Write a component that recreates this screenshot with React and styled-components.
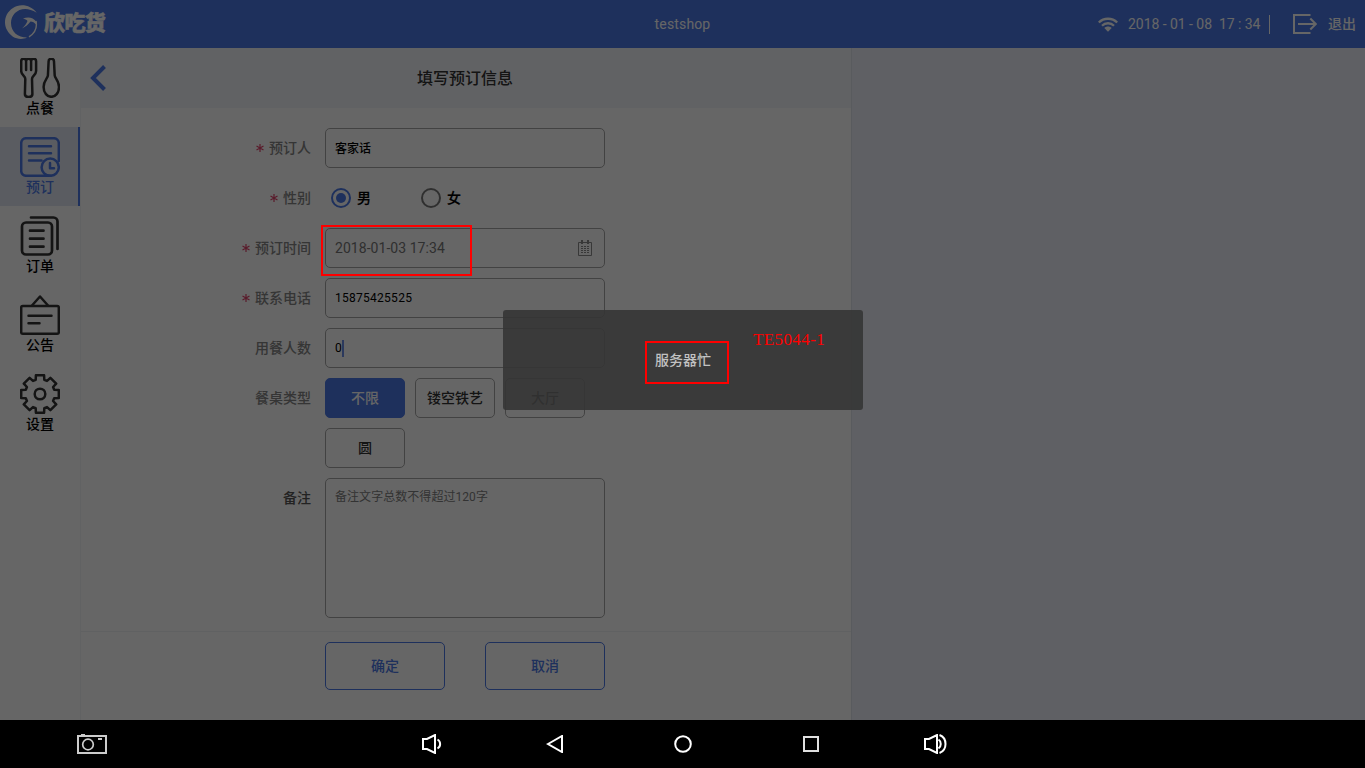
import React from "react";
import styled, { createGlobalStyle, css } from "styled-components";

const sans = `Roboto, "Noto Sans CJK SC", sans-serif`;
const blue = "#4b78e6";

const GlobalStyle = createGlobalStyle`
  * { box-sizing: border-box; }
  body { margin: 0; background: #000; font-family: ${sans}; font-size: 14px; }
`;

const Screen = styled.div`
  position: relative;
  display: flex;
  flex-direction: column;
  width: 1365px;
  height: 768px;
  overflow: hidden;
`;

const AppWindow = styled.div`
  position: relative;
  display: flex;
  flex-direction: column;
  height: 720px;
  background: #fff;
`;

const TopBar = styled.header`
  display: grid;
  grid-template-columns: 1fr auto 1fr;
  align-items: center;
  height: 48px;
  padding: 0 9px 0 4px;
  background: ${blue};
  color: #fff;
`;

const Brand = styled.div`
  display: flex;
  align-items: center;
  gap: 6px;
  height: 48px;
  padding-bottom: 4px;
`;

const BrandName = styled.span`
  font-size: 21px;
  line-height: 24px;
  font-weight: 900;
  letter-spacing: -0.6px;
  -webkit-text-stroke: 0.5px #fff;
  padding-top: 1px;
  color: #fff;
`;

const ShopName = styled.span`
  letter-spacing: 0.15px;
  margin-left: 5px;
`;

const Status = styled.div`
  display: flex;
  align-items: center;
  justify-content: flex-end;
`;

const Clock = styled.span`
  width: 132px;
  margin: 0 9px 0 10px;
  letter-spacing: -0.04px;
  white-space: pre;
`;

const Divider = styled.span`
  width: 1px;
  height: 19px;
  margin-right: 23px;
  background: #fff;
`;

const Logout = styled.span`
  display: flex;
  align-items: center;
  gap: 11px;
`;

const LogoutText = styled.span`
  padding-bottom: 2px;
  font-weight: 500;
`;

const Body = styled.div`
  display: flex;
  flex: 1;
  min-height: 0;
`;

const SideNav = styled.nav`
  width: 81px;
  border-right: 1px solid #f2f4f8;
`;

const NavItem = styled.div`
  display: flex;
  flex-direction: column;
  align-items: center;
  width: 80px;
  height: 79px;
  padding-top: 10px;
  font-weight: 500;
  line-height: 20px;
  color: ${(p) => (p.$active ? blue : "#000")};
  ${(p) =>
    p.$active &&
    css`
      background: #e2e7f3;
      box-shadow: inset -2px 0 ${blue};
    `}
`;

const NavIcon = styled.svg`
  width: 40px;
  height: 40px;
  fill: none;
  stroke: ${(p) => (p.$active ? blue : "#333")};
  stroke-width: 2.5;
  stroke-linecap: round;
  stroke-linejoin: round;
`;

const Main = styled.main`
  display: flex;
  flex-direction: column;
  width: 770px;
`;

const TitleBar = styled.div`
  display: grid;
  grid-template-columns: 40px 1fr 40px;
  align-items: center;
  height: 60px;
  padding: 0 2px 0 0;
  background: #f3f5f9;
`;

const BackIcon = styled.svg`
  width: 18px;
  height: 26px;
  margin-left: 8px;
  fill: none;
  stroke: ${blue};
  stroke-width: 4;
`;

const Title = styled.h1`
  margin: 0;
  padding-bottom: 2px;
  font-size: 16px;
  font-weight: 500;
  color: #333;
  text-align: center;
`;

const Form = styled.div`
  display: flex;
  flex-direction: column;
  gap: 10px;
  height: 523px;
  padding-top: 20px;
`;

const Row = styled.div`
  display: grid;
  grid-template-columns: 230px 280px;
  column-gap: 14px;
`;

const Label = styled.label`
  display: flex;
  align-items: center;
  justify-content: flex-end;
  gap: 5px;
  height: 40px;
  padding-bottom: 2px;
  font-weight: 500;
  color: ${(p) => (p.$dark ? "#555" : "#858585")};
`;

const RequiredIcon = styled.svg`
  width: 8px;
  height: 8px;
  margin-top: 2px;
  fill: none;
  stroke: #e0446c;
  stroke-width: 1.2;
`;

const Field = styled.div`
  display: flex;
  align-items: center;
  height: 40px;
  padding: 0 11px ${(p) => (p.$numeric ? 0 : 2)}px 9px;
  border: 1px solid #a6a6a6;
  border-radius: 5px;
  font-size: 12px;
  font-weight: ${(p) => (p.$numeric ? 400 : 500)};
  letter-spacing: ${(p) => (p.$numeric ? "0.27px" : "0")};
  color: #000;
`;

const DateField = styled(Field)`
  justify-content: space-between;
  padding-bottom: 0;
  font-size: 14px;
  font-weight: 400;
  letter-spacing: 0.05px;
  color: #777;
`;

const Caret = styled.span`
  width: 2px;
  height: 17px;
  background: #6d90e8;
`;

const RadioGroup = styled.div`
  display: grid;
  grid-template-columns: 90px 90px;
  align-items: center;
  padding-left: 6px;
  height: 40px;
`;

const RadioOption = styled.div`
  display: flex;
  align-items: center;
  gap: 6px;
  color: #000;
`;

const RadioText = styled.span`
  padding-bottom: 2px;
  font-weight: 500;
  -webkit-text-stroke: 0.2px #000;
`;

const RadioMark = styled.span`
  width: 20px;
  height: 20px;
  padding: 3px;
  border: 2px solid ${(p) => (p.$checked ? blue : "#777")};
  border-radius: 50%;
  background: ${(p) => (p.$checked ? blue : "transparent")} content-box;
`;

const Chips = styled.div`
  display: flex;
  flex-wrap: wrap;
  gap: 10px;
`;

const Chip = styled.div`
  display: flex;
  align-items: center;
  justify-content: center;
  width: 80px;
  height: 40px;
  padding-bottom: 2px;
  border: 1px solid ${(p) => (p.$selected ? blue : "#a6a6a6")};
  border-radius: 5px;
  background: ${(p) => (p.$selected ? blue : "transparent")};
  color: ${(p) => (p.$selected ? "#fff" : "#333")};
  font-weight: 500;
`;

const Note = styled.div`
  height: 140px;
  padding: 9px;
  border: 1px solid #a6a6a6;
  border-radius: 5px;
  font-size: 12px;
  line-height: 18px;
  letter-spacing: 0.05px;
  color: #808080;
`;

const Actions = styled.div`
  display: flex;
  gap: 40px;
  padding: 10px 0 0 244px;
  border-top: 1px solid #f0f2f6;
`;

const ActionButton = styled.button`
  width: 120px;
  height: 48px;
  padding: 0 0 2px;
  border: 1px solid ${blue};
  border-radius: 5px;
  background: transparent;
  color: ${blue};
  font: 500 14px ${sans};
`;

const EmptyPane = styled.aside`
  flex: 1;
  border-left: 1px solid #dfe3eb;
  background: #eef1f9;
`;

const Backdrop = styled.div`
  position: absolute;
  inset: 0;
  background: rgba(0, 0, 0, 0.6);
`;

const Toast = styled.div`
  position: absolute;
  left: 503px;
  top: 310px;
  display: flex;
  align-items: center;
  justify-content: center;
  width: 360px;
  height: 100px;
  padding-bottom: 2px;
  border-radius: 3px;
  background: rgba(52, 52, 52, 0.88);
  color: #c2c2c2;
  font-weight: 500;
`;

const MarkBox = styled.div`
  position: absolute;
  left: ${(p) => p.$x}px;
  top: ${(p) => p.$y}px;
  width: ${(p) => p.$w}px;
  height: ${(p) => p.$h}px;
  border: 2px solid #f00;
`;

const MarkText = styled.span`
  position: absolute;
  left: 753px;
  top: 330px;
  font: 17px/20px "Liberation Serif", serif;
  letter-spacing: 0.4px;
  color: #f00;
`;

const SystemBar = styled.footer`
  display: grid;
  grid-template-columns: 184px 188px 119px 128px 128px 128px 121px;
  align-items: center;
  justify-items: center;
  height: 48px;
  background: #000;
`;

const SystemIcon = styled.svg`
  grid-column: ${(p) => p.$col};
  fill: none;
  stroke: ${(p) => p.$tone || "#fff"};
  stroke-width: 2;
`;

const gearPath = (() => {
  const tooth = [[-4.3, -14.2], [-4.1, -18.8], [4.1, -18.8], [4.3, -14.2]];
  const pts = [];
  for (let i = 0; i < 8; i++) {
    const a = (i * Math.PI) / 4;
    tooth.forEach(([x, y]) =>
      pts.push(
        `${(20 + x * Math.cos(a) - y * Math.sin(a)).toFixed(2)} ${(20 + x * Math.sin(a) + y * Math.cos(a)).toFixed(2)}`
      )
    );
  }
  return `M${pts.join("L")}Z`;
})();

const navItems = [
  {
    label: "点餐",
    icon: (
      <>
        <path d="M6.1 12V3.2a2.4 2.4 0 0 0-4.9 0V13c0 4 4.100 4.500 4.100 8l-.4 15c0 4 7.500 4 7.500 0L12 21c0-3.500 4.100-4 4.100-8V3.200a2.400 2.400 0 0 0-5 0V12M6.100 3.200a2.400 2.400 0 0 1 5 0" />
        <path d="M28.600 3.500a2.700 2.700 0 0 1 5.400 0l.7 14c.2 3 4.300 5 4.300 11.500 0 6-3.600 9.800-7.700 9.800s-7.700-3.800-7.700-9.800c0-6.500 4.100-8.500 4.300-11.500Z" />
      </>
    ),
  },
  {
    label: "预订",
    active: true,
    icon: (
      <>
        <path d="M38.800 24V6a5 5 0 0 0-5-4.800H6a5 5 0 0 0-4.800 5v28a5 5 0 0 0 5 4.600h24" />
        <path d="M9 9.300h22M9 16.300h22M9 23.500h12.500" />
        <circle cx="30.200" cy="30.200" r="8.600" />
        <path d="M30 26v5.300h4" />
      </>
    ),
  },
  {
    label: "订单",
    icon: (
      <>
        <path strokeWidth="2.700" d="M11 1.500h22.500a4 4 0 0 1 4 4V33" />
        <rect strokeWidth="2.700" x="2" y="6.500" width="30" height="32" rx="4" />
        <path strokeWidth="2.700" d="M10 14.700h13.500M10 22.700h13.500M10 30.700h13.500" />
      </>
    ),
  },
  {
    label: "公告",
    icon: (
      <>
        <rect x="1.200" y="11" width="37.600" height="27.700" rx="1.500" />
        <path d="M12 10.500 20 1.500l8 9M8.500 20.700h23M8.500 28.300h11" />
      </>
    ),
  },
  {
    label: "设置",
    icon: (
      <>
        <path d={gearPath} />
        <circle cx="20" cy="20" r="5.300" />
      </>
    ),
  },
];

const Required = () => (
  <RequiredIcon viewBox="0 0 8 8">
    <path d="M4 0v8M.5 2l7 4M.5 6l7-4" />
  </RequiredIcon>
);

const FormRow = ({ label, required, dark, children }) => (
  <Row>
    <Label $dark={dark}>
      {required && <Required />}
      {label}
    </Label>
    {children}
  </Row>
);

export default function App() {
  return (
    <Screen>
      <GlobalStyle />
      <AppWindow>
        <TopBar>
          <Brand>
            <svg width="34" height="36" viewBox="0 0 34 36" fill="#fff">
              <path d="M32.700 8.700C27 1 16-1 9 4 1 9-1 19 3 26c4 8 13 11 20 7.500C14 33.500 7 28 7 19 7 8 19 0 32.700 8.700Z" />
              <path d="M32 17c1.300 6-1 12-7 15.800" fill="none" stroke="#fff" strokeWidth="1.400" />
              <path d="M19 14.500c5-2 10-1.500 13.500 3.500v3c-2-2.500-4-3.500-6-3.500-2 3-5 5-8.500 7 2.500-2.500 4.500-4.500 5.500-7.500-1-1.500-2.500-2-4.500-2.500Z" />
            </svg>
            <BrandName>欣吃货</BrandName>
          </Brand>
          <ShopName>testshop</ShopName>
          <Status>
            <svg width="20" height="15" viewBox="0 0 20 15" fill="none" stroke="#fff" strokeWidth="2.300">
              <path d="M.8 5.500c5-5 13.400-5 18.400 0M4 8.700c3.300-3.300 8.700-3.300 12 0" />
              <path d="M6.300 11c2-2 5.400-2 7.400 0L10 14.700Z" fill="#fff" stroke="none" />
            </svg>
            <Clock>2018 - 01 - 08  17 : 34</Clock>
            <Divider />
            <Logout>
              <svg width="24" height="20" viewBox="0 0 24 20" fill="none" stroke="#fff" strokeWidth="2">
                <path d="M17.500 1H1v18h16.500M5 10h18M17.300 4.500l5.500 5.500-5.500 5.500" />
              </svg>
              <LogoutText>退出</LogoutText>
            </Logout>
          </Status>
        </TopBar>
        <Body>
          <SideNav>
            {navItems.map((item) => (
              <NavItem key={item.label} $active={item.active}>
                <NavIcon viewBox="0 0 40 40" $active={item.active}>
                  {item.icon}
                </NavIcon>
                {item.label}
              </NavItem>
            ))}
          </SideNav>
          <Main>
            <TitleBar>
              <BackIcon viewBox="0 0 18 26">
                <path d="M15.500 1.500 4 13l11.500 11.500" />
              </BackIcon>
              <Title>填写预订信息</Title>
            </TitleBar>
            <Form>
              <FormRow label="预订人" required>
                <Field>客家话</Field>
              </FormRow>
              <FormRow label="性别" required>
                <RadioGroup>
                  <RadioOption>
                    <RadioMark $checked />
                    <RadioText>男</RadioText>
                  </RadioOption>
                  <RadioOption>
                    <RadioMark />
                    <RadioText>女</RadioText>
                  </RadioOption>
                </RadioGroup>
              </FormRow>
              <FormRow label="预订时间" required>
                <DateField>
                  2018-01-03 17:34
                  <svg width="16" height="16" viewBox="0 0 16 16" fill="none" stroke="#8c8c8c">
                    <path d="M1.500 2.500h13v13h-13Z" />
                    <path strokeWidth="2" d="M5 0v4M11 0v4" />
                    <path strokeDasharray="2 1" d="M4 6.500h8M4 8.500h8M4 10.500h8M4 12.500h8" />
                  </svg>
                </DateField>
              </FormRow>
              <FormRow label="联系电话" required>
                <Field $numeric>15875425525</Field>
              </FormRow>
              <FormRow label="用餐人数">
                <Field $numeric>
                  0<Caret />
                </Field>
              </FormRow>
              <FormRow label="餐桌类型">
                <Chips>
                  <Chip $selected>不限</Chip>
                  <Chip>镂空铁艺</Chip>
                  <Chip>大厅</Chip>
                  <Chip>圆</Chip>
                </Chips>
              </FormRow>
              <FormRow label="备注" dark>
                <Note>备注文字总数不得超过120字</Note>
              </FormRow>
            </Form>
            <Actions>
              <ActionButton>确定</ActionButton>
              <ActionButton>取消</ActionButton>
            </Actions>
          </Main>
          <EmptyPane />
        </Body>
        <Backdrop />
        <Toast>服务器忙</Toast>
      </AppWindow>
      <SystemBar>
        <SystemIcon $col={1} $tone="#ccc" width="30" height="20" viewBox="0 0 30 20">
          <path d="M1 2h28v17H1ZM4 .5h4M21 5h4" />
          <circle cx="11" cy="10.500" r="5.300" strokeWidth="1.700" />
        </SystemIcon>
        <SystemIcon $col={3} width="20" height="20" viewBox="0 0 20 20">
          <path d="M1 5h4l8-4v18l-8-4H1ZM15.500 5.500c3.500 2 3.500 7 0 9" />
        </SystemIcon>
        <SystemIcon $col={4} width="18" height="18" viewBox="0 0 18 18">
          <path d="M2 9 16 1v16Z" />
        </SystemIcon>
        <SystemIcon $col={5} width="18" height="18" viewBox="0 0 18 18">
          <circle cx="9" cy="9" r="7.800" />
        </SystemIcon>
        <SystemIcon $col={6} $tone="#e0e0e0" width="16" height="16" viewBox="0 0 16 16">
          <path d="M1 1h14v14H1Z" />
        </SystemIcon>
        <SystemIcon $col={7} width="23" height="20" viewBox="0 0 23 20">
          <path d="M1 5h4l8-4v18l-8-4H1ZM14.500 5.500c3 2 3 7 0 9M15.500 1c8 3 8 15 0 18" />
        </SystemIcon>
      </SystemBar>
      <MarkBox $x={321} $y={225} $w={151} $h={51} />
      <MarkBox $x={645} $y={341} $w={84} $h={43} />
      <MarkText>TE5044-1</MarkText>
    </Screen>
  );
}
